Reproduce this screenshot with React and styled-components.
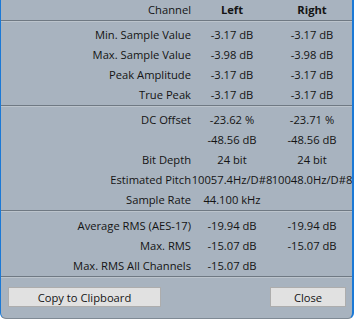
import React from "react";
import styled, { createGlobalStyle } from "styled-components";

const GlobalStyle = createGlobalStyle`
  html, body { margin: 0; padding: 0; background: #ffffff; }
  body { font-family: "Open Sans", "Noto Sans", "Liberation Sans", sans-serif; }
  * { box-sizing: border-box; }
`;

const Frame = styled.div`
  width: 354px;
  height: 319px;
  display: flex;
  flex-direction: column;
  background: #a8b3bf;
  border-left: 1px solid #1b79d6;
  border-right: 2px solid #1b79d6;
  border-bottom: 1px solid #7f8a95;
  border-radius: 0 0 6px 6px;
  overflow: hidden;
  color: #141414;
  font-size: 11.2px;
`;

const Grid = styled.div`
  display: grid;
  grid-template-columns: 191px 80px 80px;
  grid-auto-rows: 20px;
  padding-top: ${(p) => p.$top || 0}px;
`;

const Label = styled.div`
  text-align: right;
  padding-right: 1px;
  line-height: 20px;
  white-space: nowrap;
  font-weight: ${(p) => (p.$bold ? 700 : 400)};
`;

const Value = styled.div`
  display: flex;
  justify-content: center;
  line-height: 20px;
  white-space: nowrap;
  font-weight: ${(p) => (p.$bold ? 700 : 400)};
`;

const Divider = styled.div`
  height: 2px;
  border-top: 1px solid #6f7983;
  border-bottom: 1px solid #bcc4cc;
  flex: none;
`;

const ButtonBar = styled.div`
  display: flex;
  justify-content: space-between;
  padding: 9px 6px 0 7px;
`;

const Button = styled.button`
  width: ${(p) => p.$w}px;
  height: 20px;
  background: #e1e1e1;
  border: 1px solid #adadad;
  border-radius: 0;
  padding: 0;
  font-family: inherit;
  font-size: 11.2px;
  color: #141414;
`;

const header = ["Channel", "Left", "Right"];

const sections = [
  {
    top: 3,
    rows: [
      ["Min. Sample Value", "-3.17 dB", "-3.17 dB"],
      ["Max. Sample Value", "-3.98 dB", "-3.98 dB"],
      ["Peak Amplitude", "-3.17 dB", "-3.17 dB"],
      ["True Peak", "-3.17 dB", "-3.17 dB"],
    ],
  },
  {
    top: 3,
    rows: [
      ["DC Offset", "-23.62 %", "-23.71 %"],
      ["", "-48.56 dB", "-48.56 dB"],
      ["Bit Depth", "24 bit", "24 bit"],
      ["Estimated Pitch", "10057.4Hz/D#8", "10048.0Hz/D#8"],
      ["Sample Rate", "44.100 kHz", ""],
    ],
  },
  {
    top: 4,
    rows: [
      ["Average RMS (AES-17)", "-19.94 dB", "-19.94 dB"],
      ["Max. RMS", "-15.07 dB", "-15.07 dB"],
      ["Max. RMS All Channels", "-15.07 dB", ""],
    ],
  },
];

export default function App() {
  return (
    <>
      <GlobalStyle />
      <Frame>
        <Grid>
          <Label>{header[0]}</Label>
          <Value $bold>{header[1]}</Value>
          <Value $bold>{header[2]}</Value>
        </Grid>
        <Divider />
        {sections.map((s, i) => (
          <React.Fragment key={i}>
            <Grid $top={s.top}>
              {s.rows.map((r, j) => (
                <React.Fragment key={j}>
                  <Label>{r[0]}</Label>
                  <Value>{r[1]}</Value>
                  <Value>{r[2]}</Value>
                </React.Fragment>
              ))}
            </Grid>
            <Divider />
          </React.Fragment>
        ))}
        <ButtonBar>
          <Button $w={153}>Copy to Clipboard</Button>
          <Button $w={76}>Close</Button>
        </ButtonBar>
      </Frame>
    </>
  );
}
